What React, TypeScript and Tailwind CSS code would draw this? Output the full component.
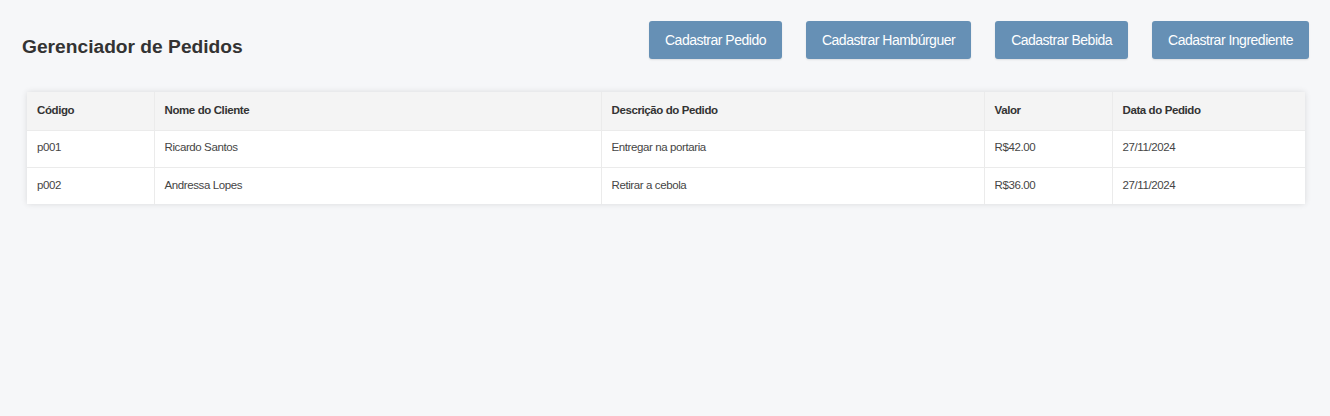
const pedidos = [
  { codigo: "p001", cliente: "Ricardo Santos", descricao: "Entregar na portaria", valor: "R$42.00", data: "27/11/2024" },
  { codigo: "p002", cliente: "Andressa Lopes", descricao: "Retirar a cebola", valor: "R$36.00", data: "27/11/2024" },
];

const botoes = ["Cadastrar Pedido", "Cadastrar Hambúrguer", "Cadastrar Bebida", "Cadastrar Ingrediente"];

const colunas = [
  { label: "Código", w: "w-[127px]" },
  { label: "Nome do Cliente", w: "w-[447px]" },
  { label: "Descrição do Pedido", w: "w-[383px]" },
  { label: "Valor", w: "w-[128px]" },
  { label: "Data do Pedido", w: "" },
];

export default function App() {
  return (
    <div className="min-h-[416px] bg-[#f6f7f9] font-['Liberation_Sans',Arial,sans-serif]">
      {/* Header */}
      <div className="flex items-start justify-between pl-[22px] pr-[21px] pt-[21px]">
        <h1 className="mt-[14px] text-[19.2px] leading-[24px] font-bold text-[#333]">Gerenciador de Pedidos</h1>
        <div className="flex gap-6">
          {botoes.map((b) => (
            <button
              key={b}
              className="h-[38px] px-[16px] rounded-[3px] bg-[#6690b5] text-white text-[14px] tracking-[-0.5px] shadow-[0_1px_2px_rgba(0,0,0,0.1)]"
            >
              {b}
            </button>
          ))}
        </div>
      </div>

      {/* Tabela */}
      <div className="ml-[27px] mr-[25px] mt-[33px] bg-white shadow-[0_0_6px_rgba(0,0,0,0.12)]">
        <table className="w-full border-collapse text-[11.5px] tracking-[-0.4px] text-left">
          <thead>
            <tr className="bg-[#f4f4f4] h-[38px]">
              {colunas.map((c, i) => (
                <th
                  key={c.label}
                  className={`${c.w} px-[10px] font-bold text-[#333] ${i > 0 ? "border-l border-[#ebebeb]" : ""}`}
                >
                  {c.label}
                </th>
              ))}
            </tr>
          </thead>
          <tbody className="text-[#454545]">
            {pedidos.map((p) => (
              <tr key={p.codigo} className="h-[37px] border-t border-[#ebebeb]">
                <td className="px-[10px] pb-[1px]">{p.codigo}</td>
                <td className="px-[10px] pb-[1px] border-l border-[#ebebeb]">{p.cliente}</td>
                <td className="px-[10px] pb-[1px] border-l border-[#ebebeb]">{p.descricao}</td>
                <td className="px-[10px] pb-[1px] border-l border-[#ebebeb]">{p.valor}</td>
                <td className="px-[10px] pb-[1px] border-l border-[#ebebeb]">{p.data}</td>
              </tr>
            ))}
          </tbody>
        </table>
      </div>
    </div>
  );
}
